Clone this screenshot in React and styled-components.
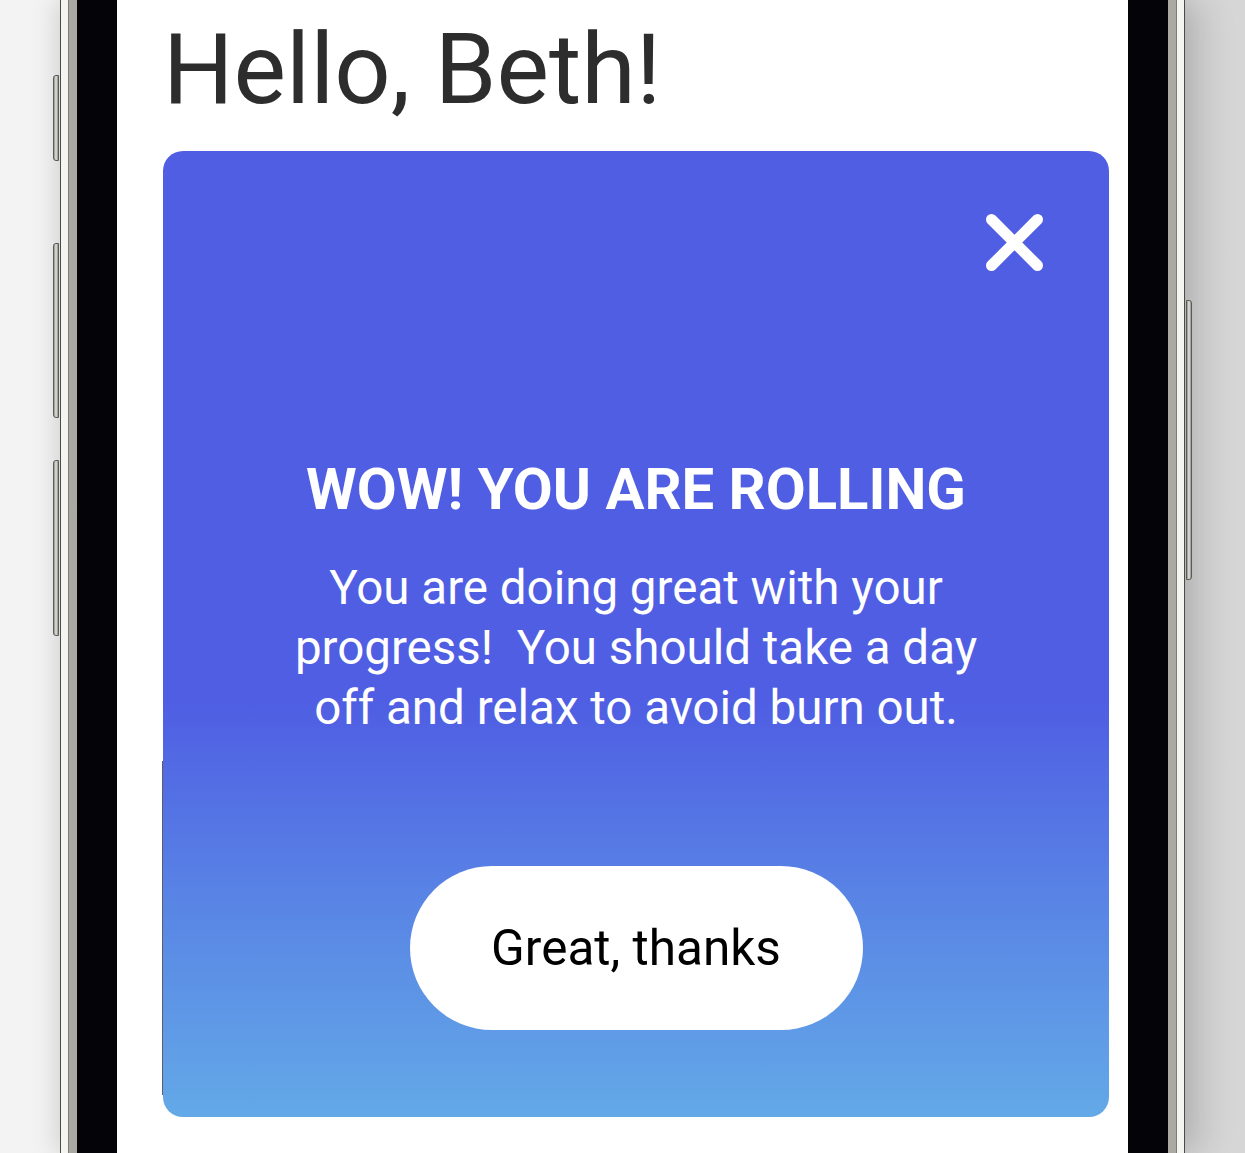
import React from 'react'
import styled, { createGlobalStyle } from 'styled-components'

const GlobalStyle = createGlobalStyle`
html, body {
  margin: 0;
  padding: 0;
}
body {
  font-family: Roboto, 'Noto Sans', Arial, sans-serif;
  background: linear-gradient(to right, #f3f3f3 0%, #e4e4e4 50%, #d6d6d6 100%);
  overflow: hidden;
}
`

const Stage = styled.div`
display: flex;
height: 1153px;
padding-left: 60px;
`

const Phone = styled.div`
position: relative;
display: flex;
height: 100%;
padding: 0 7px;
background: #f4f4f0;
border-left: 1px solid #4a4a48;
border-right: 1px solid #4a4a48;
box-shadow: 16px 0 34px rgba(0, 0, 0, 0.16), -6px 0 22px rgba(0, 0, 0, 0.08);
`

const Band = styled.div`
display: flex;
padding: 0 8px;
background: linear-gradient(to right, #a9a9a2, #c2c2ba, #a9a9a2);
border-left: 1px solid #7c7c78;
border-right: 1px solid #7c7c78;
`

const Bezel = styled.div`
display: flex;
padding: 0 40px;
background: #030308;
`

const SideKey = styled.span`
position: absolute;
left: ${p => (p.right ? 'auto' : '-8px')};
right: ${p => (p.right ? '-8px' : 'auto')};
top: ${p => p.top}px;
width: 6px;
height: ${p => p.h}px;
box-sizing: border-box;
background: linear-gradient(to right, #8f8f8a, #e6e6e0 50%, #8f8f8a);
border: 1px solid #5a5a56;
border-radius: ${p => (p.right ? '0 3px 3px 0' : '3px 0 0 3px')};
`

const Screen = styled.main`
display: flex;
flex-direction: column;
width: 1011px;
box-sizing: border-box;
padding: 9px 19px 0 46px;
background: #ffffff;
`

const Greeting = styled.h1`
margin: 0;
font-size: 99px;
line-height: 120px;
font-weight: 400;
color: #2d2d2d;
`

const Card = styled.section`
position: relative;
display: flex;
flex-direction: column;
align-items: center;
margin-top: 22px;
height: 966px;
padding-top: 63px;
box-sizing: border-box;
border-radius: 20px;
background: linear-gradient(180deg, #4f5ee3 0%, #4f5ee3 57%, #5985e5 78%, #63a9e7 100%);

&::before {
  content: '';
  position: absolute;
  left: -1px;
  top: 610px;
  bottom: 22px;
  width: 1px;
  background: #5c5c6e;
}
`

const CloseRow = styled.div`
align-self: stretch;
display: flex;
justify-content: flex-end;
padding-right: 66px;
`

const CloseButton = styled.button`
display: flex;
width: 57px;
height: 57px;
padding: 0;
border: none;
background: none;
cursor: pointer;
`

const Title = styled.h2`
margin: 184px 0 0;
font-size: 58px;
line-height: 68px;
font-weight: 700;
color: #ffffff;
text-align: center;
`

const Message = styled.p`
margin: 35px 0 0;
font-size: 47.5px;
line-height: 60px;
font-weight: 400;
color: #ffffff;
text-align: center;
`

const ActionButton = styled.button`
display: flex;
align-items: center;
justify-content: center;
margin-top: 128px;
width: 453px;
height: 164px;
border: none;
border-radius: 82px;
background: #ffffff;
font-family: Roboto, 'Noto Sans', Arial, sans-serif;
font-size: 49.5px;
font-weight: 400;
color: #000000;
cursor: pointer;
`

const CloseIcon = () => (
  <svg width="57" height="57" viewBox="0 0 57 57">
    <path d="M5.5 5.5 L51.5 51.5 M51.5 5.5 L5.5 51.5" stroke="#ffffff" strokeWidth="11" strokeLinecap="round" fill="none" />
  </svg>
)

export default function App() {
  return (
    <>
      <GlobalStyle />
      <Stage>
        <Phone>
          <SideKey top={75} h={86} />
          <SideKey top={243} h={175} />
          <SideKey top={460} h={176} />
          <SideKey right top={300} h={280} />
          <Band>
            <Bezel>
              <Screen>
                <Greeting>Hello, Beth!</Greeting>
                <Card>
                  <CloseRow>
                    <CloseButton aria-label="Close"><CloseIcon /></CloseButton>
                  </CloseRow>
                  <Title>WOW! YOU ARE ROLLING</Title>
                  <Message>
                    You are doing great with your<br />
                    progress!{'\u00a0'} You should take a day<br />
                    off and relax to avoid burn out.
                  </Message>
                  <ActionButton>Great, thanks</ActionButton>
                </Card>
              </Screen>
            </Bezel>
          </Band>
        </Phone>
      </Stage>
    </>
  )
}
